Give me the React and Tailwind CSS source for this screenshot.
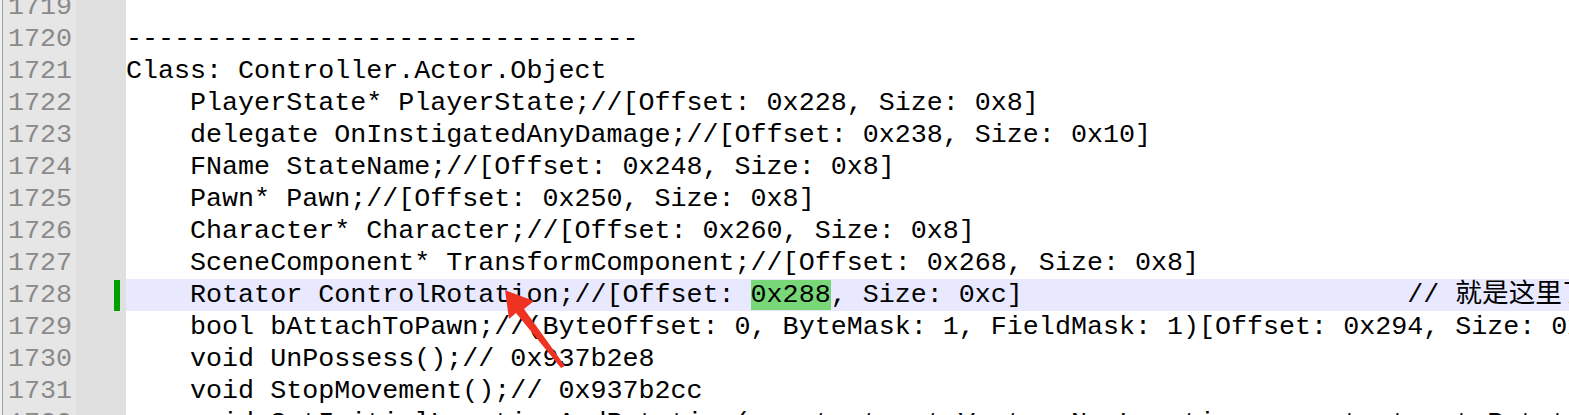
const LINES = [
  { n: 1719, text: '' },
  { n: 1720, text: '--------------------------------' },
  { n: 1721, text: 'Class: Controller.Actor.Object' },
  { n: 1722, text: '    PlayerState* PlayerState;//[Offset: 0x228, Size: 0x8]' },
  { n: 1723, text: '    delegate OnInstigatedAnyDamage;//[Offset: 0x238, Size: 0x10]' },
  { n: 1724, text: '    FName StateName;//[Offset: 0x248, Size: 0x8]' },
  { n: 1725, text: '    Pawn* Pawn;//[Offset: 0x250, Size: 0x8]' },
  { n: 1726, text: '    Character* Character;//[Offset: 0x260, Size: 0x8]' },
  { n: 1727, text: '    SceneComponent* TransformComponent;//[Offset: 0x268, Size: 0x8]' },
  { n: 1728, current: true },
  { n: 1729, text: '    bool bAttachToPawn;//(ByteOffset: 0, ByteMask: 1, FieldMask: 1)[Offset: 0x294, Size: 0x1]' },
  { n: 1730, text: '    void UnPossess();// 0x937b2e8' },
  { n: 1731, text: '    void StopMovement();// 0x937b2cc' },
  { n: 1732, text: '    void SetInitialLocationAndRotation(const struct Vector NewLocation, const struct Rotator NewRotation);// 0x937b1f0' },
]

const mono = "font-['Liberation_Mono','Noto_Sans_CJK_SC',monospace]"

function Row({ n, text, current }) {
  return (
    <div className="flex h-[32px] leading-[32px]">
      <div className="w-[73px] shrink-0 bg-[#e6e6e6] pr-[4px] text-right text-[#8a8a8a]">{n}</div>
      <div className="w-[50px] shrink-0 bg-[#e0e0e0] flex items-center pl-[38px]">
        {current && <div className="w-[6px] h-[31px] bg-[#00a000]" />}
      </div>
      <div className={'flex-1 whitespace-pre text-black ' + (current ? 'bg-[#e8e8ff]' : 'bg-white')}>
        {current ? (
          <>
            {'    Rotator ControlRotation;//[Offset: '}
            <span className="bg-[#78d878]">0x288</span>
            {', Size: 0xc]                        // 就是这里了'}
          </>
        ) : text}
      </div>
    </div>
  )
}

export default function App() {
  return (
    <div className={'relative w-[1569px] h-[415px] overflow-hidden bg-white flex text-[26.7px] ' + mono}>
      <div className="w-[2px] shrink-0 bg-[#f0f0f0]" />
      <div className="w-[1px] shrink-0 bg-[#a0a0a0]" />
      <div className="flex-1 -mt-[9px] overflow-hidden">
        {LINES.map(l => <Row key={l.n} {...l} />)}
      </div>

      {/* red annotation arrow */}
      <svg className="absolute left-0 top-0" width="1569" height="415">
        <polygon
          points="505,290 534,301 524,309 565,366 561,368 516,313 509,319"
          fill="#ee3322"
        />
      </svg>
    </div>
  )
}
